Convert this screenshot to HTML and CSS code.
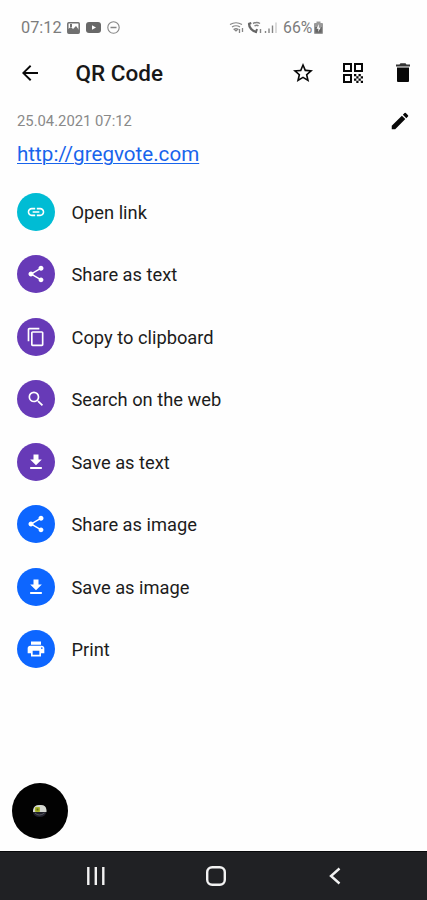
FILE: index.html
```html
<!DOCTYPE html>
<html lang="en">
<head>
<meta charset="utf-8">
<title>QR Code</title>
<link rel="stylesheet" href="styles.css">
</head>
<body>
<svg class="defs" width="0" height="0" aria-hidden="true">
  <symbol id="share" viewBox="0 0 24 24"><path d="M18 16.080c-.76 0-1.440.3-1.960.77L8.910 12.700c.05-.23.09-.46.09-.7s-.04-.47-.09-.7l7.050-4.110c.54.5 1.250.81 2.040.81 1.660 0 3-1.340 3-3s-1.340-3-3-3-3 1.340-3 3c0 .24.04.47.09.7L8.040 9.810C7.500 9.310 6.790 9 6 9c-1.660 0-3 1.340-3 3s1.340 3 3 3c.79 0 1.500-.31 2.040-.81l7.120 4.160c-.05.21-.08.43-.08.65 0 1.610 1.310 2.920 2.920 2.920s2.920-1.310 2.920-2.920-1.310-2.920-2.920-2.920z"/></symbol>
  <symbol id="save" viewBox="0 0 24 24"><path d="M19 9h-4V3H9v6H5l7 7 7-7zM5 18v2.400h14V18H5z"/></symbol>
</svg>
<div class="screen">
  <header class="status">
    <span class="time">07:12</span>
    <svg class="s-image" width="13" height="12" viewBox="0 0 13 12"><rect x=".8" y=".8" width="11.400" height="10.400" rx="1" fill="none" stroke="#707070" stroke-width="1.500"/><path d="M1 10V7l3-2 2 2 3-3 3 4v3H1zM3 2h2v3H3z" fill="#707070"/></svg>
    <svg class="s-video" width="15" height="11" viewBox="0 0 15 11"><rect width="15" height="11" rx="3" fill="#686868"/><path d="M6 3.200v4.600l4-2.300z" fill="#fff"/></svg>
    <svg class="s-dnd" width="13" height="13" viewBox="0 0 13 13" fill="none" stroke="#858585" stroke-width="1.100"><circle cx="6.500" cy="6.500" r="5.700"/><path d="M3.500 6.500h6" stroke-width="1.500"/></svg>
    <svg class="s-signal" width="49" height="13" viewBox="0 0 49 13" fill="none" stroke="#858585">
      <path d="M1 3.500Q7 0 13 3.500M3 6Q7 3.500 11 6M5 8.200Q7 7 9 8.200L7 10z" stroke-width="1.200"/>
      <path d="M10.500 8v4M13.500 7v4" stroke-width="1.300"/>
      <path d="M20 2.500c0 4 3 8 8 8.500" stroke="#666" stroke-width="2.300"/><path d="M19.300 3l3-1M27 11l1-3" stroke="#666" stroke-width="2"/><path d="M24 2.500q4-2 7 0M25.500 5q2.500-1.500 4 0M31.500 8v4" stroke-width="1.400"/>
      <path d="M36.500 10v2M40 7.500V12M43.500 4.500V12" stroke-width="1.400"/><path d="M47 1.500V12" stroke="#d8d8d8" stroke-width="1.800"/>
    </svg>
    <span class="percent">66%</span>
    <svg class="s-battery" width="9" height="13" viewBox="0 0 9 13"><path d="M2.500 2V.5h4V2H8q1 0 1 1v9q0 1-1 1H1q-1 0-1-1V3q0-1 1-1z" fill="#999"/><path d="M1.200 6h6.600v5.800H1.200z" fill="#666"/><path d="M5 3L2.500 7.800h2L4 11l2.800-4.500h-2z" fill="#fff"/></svg>
  </header>
  <nav class="toolbar">
    <svg class="icon back" viewBox="0 0 24 24"><path d="M20 11.100H7.600l5.700-5.700L12 4l-8 8 8 8 1.400-1.400-5.800-5.700H20z"/></svg>
    <h1>QR Code</h1>
    <svg class="icon" viewBox="0 0 24 24"><path d="M22 9.240l-7.190-.62L12 2 9.190 8.630 2 9.240l5.460 4.730L5.820 21 12 17.270 18.180 21l-1.630-7.030L22 9.240zM12 15.400l-3.760 2.270 1-4.280-3.320-2.880 4.380-.38L12 6.100l1.710 4.040 4.380.38-3.320 2.880 1 4.280L12 15.400z"/></svg>
    <svg class="icon" viewBox="0 0 24 24"><path fill-rule="evenodd" d="M2 2h9v9H2zM4 4v5h5V4zM13 2h9v9h-9zM15 4v5h5V4zM2 13h9v9H2zM4 15v5h5v-5zM13 13h2.300v2.300H13zM15.300 15.300h2.200v2.200h-2.200zM17.500 13h2.300v2.300h-2.300zM19.800 15.300H22v2.200h-2.200zM13 17.500h2.300v2.300H13zM17.500 17.500h2.300v2.300h-2.300zM15.300 19.800h2.200V22h-2.200zM19.800 19.800H22V22h-2.200z"/></svg>
    <svg class="icon" viewBox="0 0 24 24"><path d="M6 20q0 1 1 1h10q1 0 1-1V6.500H6z"/><path d="M19 3.500h-3.500l-1-1.200h-5l-1 1.200H5v2h14z" fill="#333"/></svg>
  </nav>
  <main>
    <div class="meta">
      <time>25.04.2021 07:12</time>
      <svg class="icon edit" viewBox="0 0 24 24"><path d="M3 17.250V21h3.750L17.810 9.940l-3.750-3.750L3 17.250zM20.710 7.040a1 1 0 000-1.410l-2.340-2.340a1 1 0 00-1.410 0l-1.830 1.830 3.750 3.750 1.830-1.830z"/></svg>
    </div>
    <a class="link" href="#">http://gregvote.com</a>
    <ul class="actions">
      <li><span class="dot teal"><svg viewBox="0 0 24 24"><path d="M3.900 12c0-1.710 1.390-3.100 3.100-3.100h4V7H7c-2.760 0-5 2.240-5 5s2.240 5 5 5h4v-1.900H7c-1.710 0-3.100-1.390-3.100-3.100zM8 13h8v-2H8v2zm9-6h-4v1.900h4c1.710 0 3.100 1.390 3.100 3.100s-1.390 3.100-3.100 3.100h-4V17h4c2.760 0 5-2.240 5-5s-2.240-5-5-5z"/></svg></span><span class="label">Open link</span></li>
      <li><span class="dot purple"><svg><use href="#share"/></svg></span><span class="label">Share as text</span></li>
      <li><span class="dot purple"><svg viewBox="0 0 24 24"><path d="M16 1H4c-1.100 0-2 .9-2 2v14h2V3h12V1zm3 4H8c-1.100 0-2 .9-2 2v14c0 1.100.9 2 2 2h11c1.100 0 2-.9 2-2V7c0-1.100-.9-2-2-2zm0 16H8V7h11v14z"/></svg></span><span class="label">Copy to clipboard</span></li>
      <li><span class="dot purple"><svg viewBox="0 0 24 24"><path d="M15.500 14h-.79l-.28-.27A6.470 6.470 0 0016 9.500 6.500 6.500 0 109.500 16c1.610 0 3.090-.59 4.230-1.570l.27.280v.79l5 4.990L20.490 19l-4.990-5zm-6 0C7.010 14 5 11.990 5 9.500S7.010 5 9.500 5 14 7.010 14 9.500 11.990 14 9.500 14z"/></svg></span><span class="label">Search on the web</span></li>
      <li><span class="dot purple"><svg><use href="#save"/></svg></span><span class="label">Save as text</span></li>
      <li><span class="dot blue"><svg><use href="#share"/></svg></span><span class="label">Share as image</span></li>
      <li><span class="dot blue"><svg><use href="#save"/></svg></span><span class="label">Save as image</span></li>
      <li><span class="dot blue"><svg viewBox="0 0 24 24"><path d="M19 8H5c-1.660 0-3 1.340-3 3v6h4v4h12v-4h4v-6c0-1.660-1.340-3-3-3zm-3 11H8v-5h8v5zm3-7c-.55 0-1-.45-1-1s.45-1 1-1 1 .45 1 1-.45 1-1 1zm-1-9H6v4h12V3z"/></svg></span><span class="label">Print</span></li>
    </ul>
  </main>
  <div class="bubble"><svg width="16" height="16" viewBox="0 0 16 16"><path d="M1 9V7q1-5 6-5h2q5 0 5.500 5v2z" fill="#d4d7d0"/><path d="M1 9h13.500q-1 5-7 5T1 9z" fill="#20202a"/><path d="M3 10q4 4 9.500 0" fill="none" stroke="#55565f"/><rect x="3" y="4" width="5" height="5" rx="1" fill="#a9b62c"/><rect x="4.500" y="5.500" width="2" height="2" fill="#626d16"/></svg></div>
  <footer class="navbar">
    <svg width="18" height="18" viewBox="0 0 18 18"><path d="M1.300 0v18M8.800 0v18M16.300 0v18"/></svg>
    <svg class="home" width="20" height="20" viewBox="0 0 20 20"><rect x="1.200" y="1.200" width="17.600" height="17.600" rx="5"/></svg>
    <svg width="12" height="18" viewBox="0 0 12 18"><path d="M10.500 1.500L2 9l8.500 7.500"/></svg>
  </footer>
</div>
</body>
</html>
```

FILE: styles.css
```css
* { box-sizing: border-box; }
body { margin: 0; background: #fefefe; font-family: Roboto, sans-serif; color: #1c1c1c; }
.defs { position: absolute; }
.screen { width: 427px; height: 900px; display: flex; flex-direction: column; overflow: hidden; }
.status { height: 48px; padding: 7px 0 0 21px; display: flex; align-items: center; color: #7c7c7c; font-size: 16.300px; }
.time { width: 46px; }
.s-video { margin-left: 6px; }
.s-dnd { margin-left: 6px; }
.s-signal { margin-left: 109px; }
.percent { margin-left: 5px; width: 31px; font-size: 15.800px; }
.toolbar { height: 50px; padding: 0 12px 0 18px; display: flex; align-items: center; }
.icon { width: 24px; height: 24px; flex: none; fill: #080808; }
.toolbar h1 { margin: 0 auto 0 33.500px; font-size: 22.500px; font-weight: 500; line-height: 30px; color: #181818; }
.toolbar .icon + .icon { margin-left: 26px; }
main { padding: 10px 16px 0 17px; }
.meta { height: 26px; display: flex; align-items: center; justify-content: space-between; }
.meta time { font-size: 14.800px; color: #898989; }
.edit { width: 22px; height: 22px; }
.link { display: block; width: max-content; height: 38px; margin-top: 6px; font-size: 20.600px; line-height: 28px; color: #1864ec; text-decoration-thickness: 1px; text-underline-offset: 2px; }
.actions { margin: 2.700px 0 0; padding: 0; list-style: none; display: grid; grid-auto-rows: 62.500px; }
.actions li { display: flex; align-items: center; gap: 16.500px; }
.dot { width: 38px; height: 38px; border-radius: 50%; display: grid; place-items: center; }
.dot svg { width: 20px; height: 20px; fill: #fff; }
.teal { background: #00bcd4; }
.purple { background: #673ab7; }
.blue { background: #0d66ff; }
.label { font-size: 18.300px; line-height: 24px; padding-top: 2px; }
.bubble { width: 56px; height: 56px; margin: auto 0 12px 12px; border-radius: 50%; background: #020202; display: grid; place-items: center; }
.navbar { height: 49px; flex: none; background: #202124; border-top: 1px solid #08090b; display: flex; align-items: center; padding: 0 86px 1px 87px; justify-content: space-between; }
.navbar svg { fill: none; stroke: #f2f2f2; stroke-width: 2.400; }
.navbar .home { margin-right: 3px; }
```
